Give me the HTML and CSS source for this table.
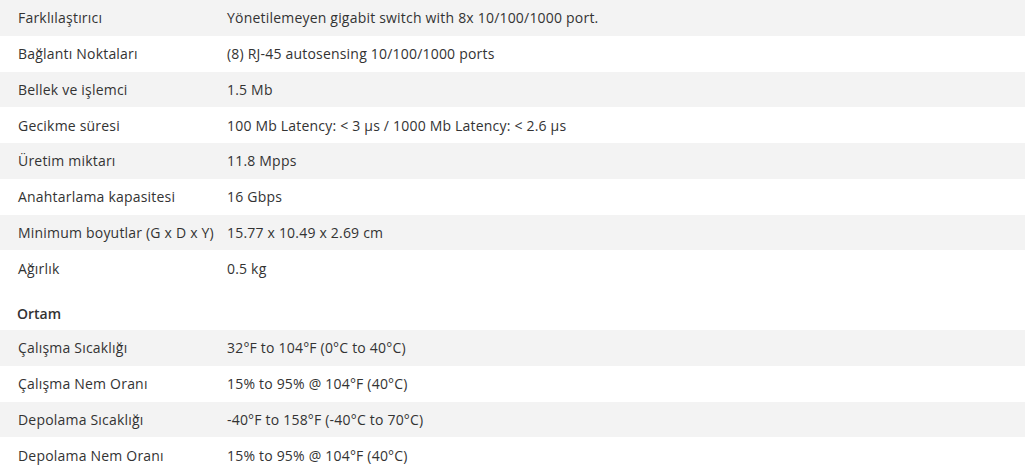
FILE: index.html
```html
<!DOCTYPE html>
<html lang="tr">
<head>
<meta charset="utf-8">
<title>Özellikler</title>
<link rel="stylesheet" href="styles.css">
</head>
<body>
<div class="specs">
  <div class="row"><div class="label">Farklılaştırıcı</div><div class="value">Yönetilemeyen gigabit switch with 8x 10/100/1000 port.</div></div>
  <div class="row"><div class="label">Bağlantı Noktaları</div><div class="value">(8) RJ-45 autosensing 10/100/1000 ports</div></div>
  <div class="row"><div class="label">Bellek ve işlemci</div><div class="value">1.5 Mb</div></div>
  <div class="row"><div class="label">Gecikme süresi</div><div class="value">100 Mb Latency: &lt; 3 µs / 1000 Mb Latency: &lt; 2.6 µs</div></div>
  <div class="row"><div class="label">Üretim miktarı</div><div class="value">11.8 Mpps</div></div>
  <div class="row"><div class="label">Anahtarlama kapasitesi</div><div class="value">16 Gbps</div></div>
  <div class="row"><div class="label">Minimum boyutlar (G x D x Y)</div><div class="value">15.77 x 10.49 x 2.69 cm</div></div>
  <div class="row"><div class="label">Ağırlık</div><div class="value">0.5 kg</div></div>
  <div class="section">Ortam</div>
  <div class="row"><div class="label">Çalışma Sıcaklığı</div><div class="value">32°F to 104°F (0°C to 40°C)</div></div>
  <div class="row"><div class="label">Çalışma Nem Oranı</div><div class="value">15% to 95% @ 104°F (40°C)</div></div>
  <div class="row"><div class="label">Depolama Sıcaklığı</div><div class="value">-40°F to 158°F (-40°C to 70°C)</div></div>
  <div class="row"><div class="label">Depolama Nem Oranı</div><div class="value">15% to 95% @ 104°F (40°C)</div></div>
</div>
</body>
</html>
```
FILE: styles.css
```css
html, body {
  margin: 0;
  padding: 0;
  background: #fff;
}
body {
  font-family: "Open Sans", "Liberation Sans", sans-serif;
  font-size: 14px;
  letter-spacing: 0.2px;
  color: #333;
}
.specs {
  width: 1025px;
  display: flex;
  flex-direction: column;
}
.row {
  display: flex;
  align-items: center;
  height: 35.75px;
  padding-left: 18px;
}
.specs > .row:nth-child(odd) {
  background: #f3f3f3;
}
.specs > .section ~ .row:nth-child(odd) {
  background: transparent;
}
.specs > .section ~ .row:nth-child(even) {
  background: #f3f3f3;
}
.label {
  width: 209px;
  flex: none;
}
.value {
  flex: 1;
}
.section {
  height: 44px;
  box-sizing: border-box;
  padding: 18px 0 0 17px;
  font-weight: 600;
  line-height: 20px;
  letter-spacing: 0;
}
```
